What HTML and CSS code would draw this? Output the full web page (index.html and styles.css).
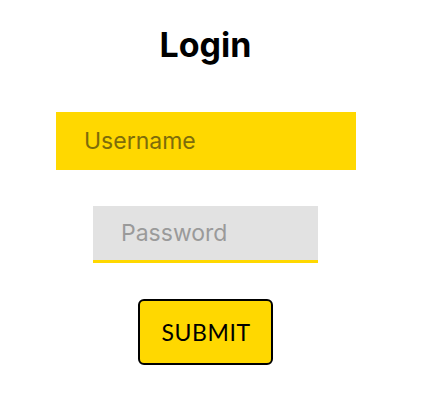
FILE: index.html
```html
<!DOCTYPE html>
<html>
<head>
<meta charset="utf-8">
<link rel="stylesheet" href="styles.css">
</head>
<body>
<form class="login">
  <h1 class="title">Login</h1>
  <input class="field field-user" type="text" placeholder="Username">
  <input class="field field-pass" type="password" placeholder="Password">
  <button class="submit" type="button">SUBMIT</button>
</form>
</body>
</html>
```

FILE: styles.css
```css
html, body {
  margin: 0;
  padding: 0;
  background: #fff;
}
.login {
  width: 411px;
  display: flex;
  flex-direction: column;
  align-items: center;
  padding-top: 24px;
}
.title {
  margin: 0;
  font-family: Inter, "Liberation Sans", sans-serif;
  font-weight: 700;
  font-size: 34px;
  line-height: 42px;
  color: #000;
}
.field {
  box-sizing: border-box;
  border: none;
  outline: none;
  font-family: Inter, "Liberation Sans", sans-serif;
  font-size: 23px;
  padding: 0 28px;
}
.field-user {
  margin-top: 46px;
  margin-left: 1px;
  width: 300px;
  height: 58px;
  background: #ffd800;
}
.field-user::placeholder {
  color: #7d6c0a;
}
.field-pass {
  margin-top: 36px;
  width: 225px;
  height: 57px;
  background: #e2e2e2;
  border-bottom: 3px solid #ffd800;
}
.field-pass::placeholder {
  color: #9a9a9a;
}
.submit {
  margin-top: 36px;
  width: 135px;
  height: 66px;
  background: #ffd800;
  border: 2px solid #000;
  border-radius: 6px;
  font-family: Lato, "Liberation Sans", sans-serif;
  font-size: 23px;
  color: #000;
  letter-spacing: 0.6px;
  padding: 0 0 0 1px;
}
```
